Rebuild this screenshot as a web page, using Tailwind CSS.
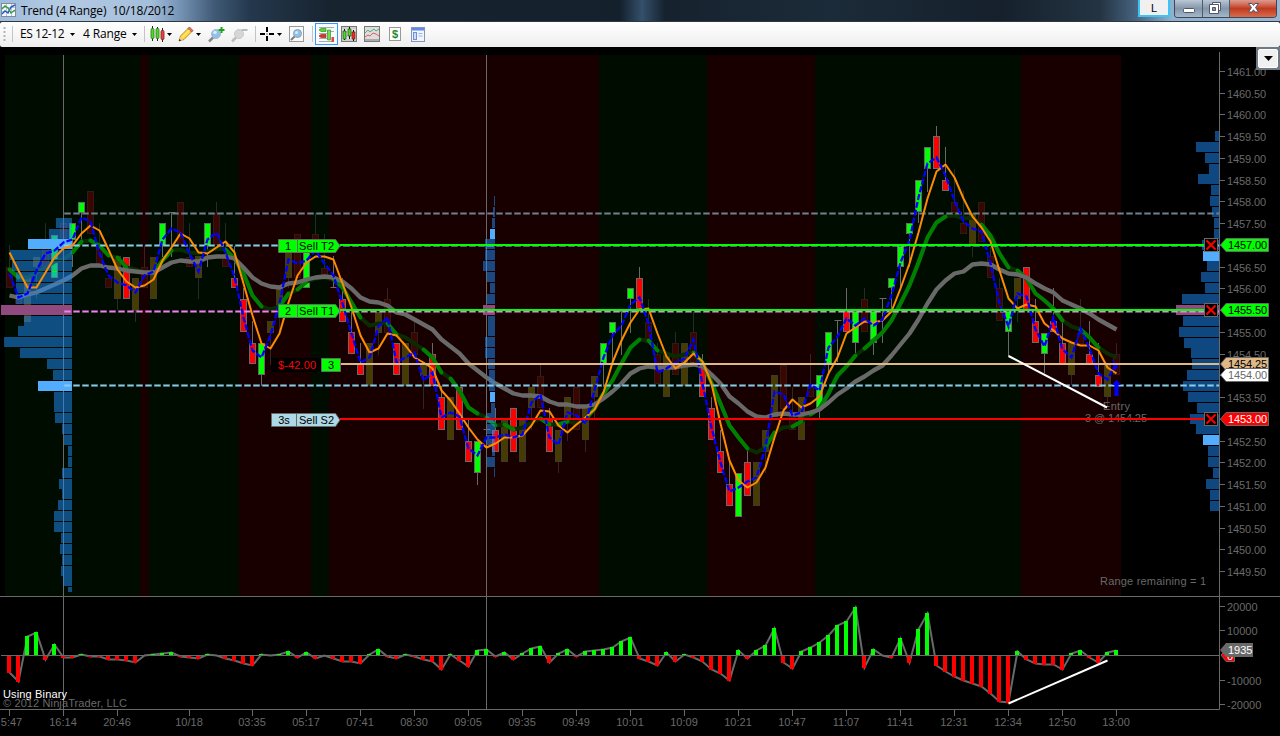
<!DOCTYPE html>
<html lang="en">
<head>
  <meta charset="UTF-8">
  <meta name="viewport" content="width=device-width, initial-scale=1.0">
  <title>Trend (4 Range) 10/18/2012</title>
  <script src="https://cdn.jsdelivr.net/npm/@tailwindcss/browser@4"></script>
</head>
<body class="bg-black w-[1280px] h-[736px] overflow-hidden flex flex-col font-['Open_Sans','Noto_Sans',sans-serif] text-black">

  <!-- title bar -->
  <header class="h-[22px] shrink-0 flex items-start justify-between overflow-hidden border-b border-[#303840] bg-[linear-gradient(90deg,#9dbbdc_0px,#b4cbe3_60px,#a4bedb_150px,#7896b7_178px,#3f5975_215px,#24384d_250px,#17232f_330px,#14202c_620px,#34506c_642px,#16222e_665px,#1c2b39_830px,#15202b_1000px,#243443_1100px,#46637f_1136px,#8fb0cf_1172px,#9ab6d3_1280px)]">
    <div class="flex items-center h-[21px] pl-px">
      <svg class="w-[15px] h-[15px]" viewBox="0 0 15 15">
        <rect x=".5" y=".5" width="14" height="13" fill="#f4f7fb" stroke="#7f8c9b"/>
        <path d="M1 4.500h13M1 8.500h13M5.500 1v12M10.500 1v12" stroke="#b9c6d6"/>
        <path d="M1 11l3-3 3 2 3-6 4-2" fill="none" stroke="#2456c8" stroke-width="1.4"/>
        <path d="M1 6l3-3 3 2 3 5 4-3" fill="none" stroke="#36a03c" stroke-width="1.4"/>
      </svg>
      <span class="ml-[5px] text-[12px] leading-[20px] whitespace-pre tracking-[-0.17px]">Trend (4 Range)  10/18/2012</span>
    </div>
    <div class="flex items-start pr-[3px]">
      <div class="w-[32px] h-[17px] mr-[4px] border-2 border-t-0 border-[#3cc4f4] bg-[#f0f0f0] text-[11px] leading-[16px] text-center font-['Liberation_Sans',sans-serif]">L</div>
      <div class="flex h-[18px] border border-t-0 border-[#3b4858] rounded-b-[4px] overflow-hidden">
        <div class="w-[28px] bg-linear-to-b from-[#b9c7d6] via-[#8496a9] to-[#a3b7cb] border-r border-[#4e5b6b]">
          <svg class="w-[28px] h-[17px]" viewBox="0 0 28 17"><rect x="8.500" y="8.500" width="11" height="4" rx="1" fill="#fff" stroke="#535666"/></svg>
        </div>
        <div class="w-[27px] bg-linear-to-b from-[#b9c7d6] via-[#8496a9] to-[#a3b7cb] border-r border-[#4e5b6b]">
          <svg class="w-[26px] h-[17px]" viewBox="0 0 26 17">
            <path d="M9.500 2.500h8v8h-8z" fill="#fff" stroke="#535666"/>
            <path d="M6.500 4.500h9v9h-9z" fill="#fff" stroke="#535666"/>
            <path d="M9.500 7.500h3v3h-3z" fill="#8496a9" stroke="#535666"/>
          </svg>
        </div>
        <div class="w-[46px] bg-linear-to-b from-[#dd9b8f] via-[#c03a20] to-[#d96a4b]">
          <svg class="w-[46px] h-[17px]" viewBox="0 0 46 17">
            <path d="M18.500 3.500h3.500l1.500 2 1.500-2h3.500l-3 4 3 4.500h-3.500l-1.500-2.200-1.500 2.200h-3.500l3-4.500z" fill="#fff" stroke="#535666"/>
          </svg>
        </div>
      </div>
    </div>
  </header>

  <!-- toolbar -->
  <nav class="h-[25px] shrink-0 flex items-center bg-linear-to-b from-white to-[#eeeeee] text-[12px] leading-[20px] pl-[3px] pb-px rounded-[2px]">
    <svg class="w-[3px] h-[16px]" viewBox="0 0 3 16"><path d="M1.500 1v14" stroke="#b4b4b4" stroke-width="2" stroke-dasharray="2 2"/></svg>
    <i class="w-px h-[16px] bg-[#c4c4c4] ml-[6px]"></i>
    <span class="w-[46px] ml-[7px] whitespace-nowrap tracking-[-0.45px]">ES 12-12</span>
    <svg class="w-[5px] h-[3px] ml-[4px]" viewBox="0 0 5 3"><path d="M0 0h5L2.500 3z"/></svg>
    <span class="w-[45px] ml-[8px] whitespace-nowrap tracking-[-0.15px]">4 Range</span>
    <svg class="w-[5px] h-[3px] ml-[4px]" viewBox="0 0 5 3"><path d="M0 0h5L2.500 3z"/></svg>
    <i class="w-px h-[16px] bg-[#c4c4c4] ml-[7px]"></i>
    <!-- chart style -->
    <svg class="w-[16px] h-[16px] ml-[5px]" viewBox="0 0 16 16">
      <path d="M2.500 0v15M7.500 1v14M12.500 2v14" stroke="#222"/>
      <rect x="1" y="2.500" width="3" height="10" rx="1" fill="#51d62a" stroke="#2b7a1e" stroke-width=".8"/>
      <rect x="6" y="2.500" width="3" height="10" rx="1" fill="#51d62a" stroke="#2b7a1e" stroke-width=".8"/>
      <rect x="11" y="4.500" width="3" height="9" rx="1" fill="#e3453f" stroke="#8a1d18" stroke-width=".8"/>
    </svg>
    <svg class="w-[5px] h-[3px] ml-px" viewBox="0 0 5 3"><path d="M0 0h5L2.500 3z"/></svg>
    <!-- drawing tools -->
    <svg class="w-[16px] h-[16px] ml-[6px]" viewBox="0 0 16 16">
      <path d="M1 15l1.500-5L11 1.500l3.500 3.500L6 13.500z" fill="#ffd83a" stroke="#a87416" stroke-width=".8"/>
      <path d="M10 2.500L11.500 1l3.500 3.500L13.500 6z" fill="#e4726c" stroke="#9c4a3c" stroke-width=".7"/>
      <path d="M1 15l1.300-4.500L5.500 14z" fill="#e9c99a"/><path d="M1 15l.5-2 1.500 1.500z"/><path d="M4.500 11l7-7" stroke="#fff3a5"/>
    </svg>
    <svg class="w-[5px] h-[3px] ml-[2px]" viewBox="0 0 5 3"><path d="M0 0h5L2.500 3z"/></svg>
    <!-- zoom in / out -->
    <svg class="w-[17px] h-[17px] ml-[7px]" viewBox="0 0 17 17">
      <path d="M1 15.500l5-5" stroke="#888" stroke-width="2.500"/>
      <circle cx="8" cy="8" r="4.500" fill="#8fc1ea" stroke="#a9b7c5"/><circle cx="7" cy="6.500" r="1.800" fill="#d8ecfa"/>
      <path d="M13.500 1v6M10.500 4h6" stroke="#18a51c" stroke-width="2"/>
    </svg>
    <svg class="w-[17px] h-[17px] ml-[6px]" viewBox="0 0 17 17">
      <path d="M1 15.500l5-5" stroke="#bdbdbd" stroke-width="2.500"/>
      <circle cx="8" cy="8" r="4.500" fill="#d6d6d6" stroke="#cacaca"/><path d="M10.500 4h6" stroke="#b9b9b9" stroke-width="2"/>
    </svg>
    <i class="w-px h-[16px] bg-[#c4c4c4] ml-[7px]"></i>
    <!-- cross hair -->
    <svg class="w-[14px] h-[14px] ml-[4px]" viewBox="0 0 14 14"><path d="M7 0v5M7 9v5M0 7h5M9 7h5" stroke="#000" stroke-width="2"/><path d="M6.500 6.500h1v1h-1z"/></svg>
    <svg class="w-[5px] h-[3px] ml-[3px]" viewBox="0 0 5 3"><path d="M0 0h5L2.500 3z"/></svg>
    <svg class="w-[16px] h-[16px] ml-[7px]" viewBox="0 0 16 16">
      <rect x=".5" y=".5" width="14" height="15" fill="#fafafa" stroke="#999"/>
      <path d="M2 14l4-4" stroke="#7b7b7b" stroke-width="2"/><circle cx="8.500" cy="7.500" r="4" fill="#8fc1ea" stroke="#8ea1b3"/><circle cx="7.500" cy="6.500" r="1.500" fill="#d8ecfa"/>
    </svg>
    <i class="w-px h-[16px] bg-[#c4c4c4] ml-[7px]"></i>
    <!-- chart trader -->
    <div class="w-[23px] h-[22px] ml-[2px] border border-[#3399ff] bg-[#f8fbfe] flex items-center justify-center">
      <svg class="w-[17px] h-[17px]" viewBox="0 0 17 17">
        <path d="M1 1.500h15M9 5.500h7M1 7.500h9M1 12.500h9M1 15.500h15" stroke="#aaa"/>
        <path d="M1 4l2-1.500h5v3H3z" fill="#51d62a" stroke="#27831b" stroke-width=".6"/>
        <path d="M1 10l2-1.500h5v3H3z" fill="#e3312c" stroke="#8a1d18" stroke-width=".6"/>
        <path d="M9.500 4h3v10h-3z" fill="#6be048" stroke="#27831b" stroke-width=".6"/><path d="M13.500 11h2.500v5h-2.500z" fill="#e3453f"/>
      </svg>
    </div>
    <svg class="w-[16px] h-[16px] ml-[3px]" viewBox="0 0 16 16">
      <rect x=".5" y=".5" width="15" height="15" fill="#ccc" stroke="#777"/><path d="M1 4h14M1 8h14M1 12h14" stroke="#f4f4f4"/>
      <path d="M3.500 3v11M8.500 1v12M12.500 4v11" stroke="#111"/>
      <path d="M2 5h3v8H2z" fill="#51d62a" stroke="#1c5514" stroke-width=".7"/><path d="M7 3h3v7H7z" fill="#51d62a" stroke="#1c5514" stroke-width=".7"/><path d="M11 6h3v7h-3z" fill="#e3312c" stroke="#7d1a15" stroke-width=".7"/>
    </svg>
    <svg class="w-[16px] h-[16px] ml-[7px]" viewBox="0 0 16 16">
      <rect x=".5" y=".5" width="15" height="15" fill="#ddd" stroke="#777"/><path d="M1 13h14v2H1z" fill="#aaa"/>
      <path d="M1 7l3-3 2 2 4-3 2 2 3-2" fill="none" stroke="#4eb07a"/><path d="M1 11l3-2 2 1 3-3 3 1 3 2" fill="none" stroke="#e46060"/>
    </svg>
    <svg class="w-[12px] h-[14px] ml-[9px]" viewBox="0 0 12 14">
      <rect x=".5" y=".5" width="11" height="13" fill="#fff" stroke="#999"/>
      <text x="6" y="11" text-anchor="middle" class="text-[11px] font-bold fill-[#1e8a2a] font-['Liberation_Sans',sans-serif]">$</text>
    </svg>
    <svg class="w-[14px] h-[15px] ml-[10px]" viewBox="0 0 14 15">
      <rect x=".5" y=".5" width="13" height="14" fill="#f2f5fb" stroke="#8796b4"/><path d="M1 1h12v2.500H1z" fill="#5f8be6"/>
      <rect x="2.500" y="5.500" width="3" height="7" fill="#cfdcf8" stroke="#6b8fdc"/><path d="M7.500 6.500h4M7.500 9h4" stroke="#9bb2e6"/>
    </svg>
  </nav>

  <!-- chart -->
  <main class="relative w-[1280px] h-[689px]">
    <svg id="chart" class="block w-[1280px] h-[689px] font-['Liberation_Sans',Arial,sans-serif] text-[11px]" viewBox="0 47 1280 689"></svg>
    <div class="absolute right-0 top-0 w-[24px] h-[23px] bg-[#707a84] p-[2px]">
      <div class="w-full h-full bg-[#f0f0f0] border border-white rounded-[2px] flex items-center justify-center">
        <svg class="w-[9px] h-[5px]" viewBox="0 0 9 5"><path d="M0 0h9L4.500 5z"/></svg>
      </div>
    </div>
  </main>

  <script>
    // g/r = strong up/down, Y/R = faded up/down, T = no body
    // kind, body top, body bottom, wick top, wick bottom
    const bars = `R 267 288 245 288|R 295 304 295 304|Y 278 322 278 322|Y 257 267 257 299|R 245 267 223 267|g 235 278 235 278|R 223 238 223 238|g 223 240 223 267
g 202 213 202 245|R 191 234 191 234|R 245 267 223 267|R 278 288 278 288|Y 256 299 256 310|r 257 299 257 299|Y 278 311 278 322|R 267 288 245 288
Y 257 299 257 299|g 223 246 223 257|T 213 213 213 257|R 202 245 202 245|R 257 267 223 267|Y 256 278 256 299|g 223 246 223 267|R 213 245 202 245
R 257 267 223 267|r 278 288 246 288|r 299 332 288 332|r 343 364 321 364|g 343 375 343 386|Y 321 333 321 365|Y 288 312 288 333|Y 250 278 250 288
R 234 278 234 278|g 246 288 246 288|R 234 246 213 246|R 268 278 234 278|T 288 288 256 288|r 299 322 278 322|r 332 354 310 354|r 364 375 343 375
Y 343 386 343 386|Y 312 333 312 355|R 299 333 288 333|r 343 375 343 375|Y 343 386 343 386|R 332 355 322 355|Y 364 376 364 409|r 354 386 343 386
r 397 430 386 430|Y 397 440 397 440|r 387 430 387 430|r 441 462 420 462|g 441 473 441 485|T 430 430 430 462|r 430 452 408 452|Y 420 462 420 462
r 408 452 408 452|Y 420 462 420 462|Y 387 408 387 430|R 376 408 365 408|r 419 452 408 452|Y 430 462 430 473|Y 397 420 397 441|R 387 430 387 430
Y 408 440 408 452|Y 376 397 376 420|g 343 364 343 387|g 322 333 322 365|T 312 312 312 355|g 288 299 288 333|r 278 309 267 309|R 322 343 299 343
R 354 384 343 384|Y 354 397 354 397|R 343 375 332 375|Y 343 386 343 386|R 332 365 312 365|r 365 397 354 397|r 408 440 397 440|r 451 473 430 473
r 484 506 462 506|g 473 517 473 517|r 462 496 451 496|Y 462 506 462 506|Y 430 452 430 473|Y 375 417 375 417|R 365 409 365 409|R 417 430 387 430
Y 397 440 397 440|R 387 397 354 397|g 375 408 375 418|g 332 364 332 375|T 321 321 321 362|r 311 332 288 332|g 311 343 311 354|R 299 332 288 332
g 311 343 311 355|T 299 299 299 343|g 278 288 278 310|g 246 267 246 288|g 223 234 223 267|g 180 212 180 223|g 147 169 147 192|r 136 169 126 169
r 180 191 147 191|R 202 213 169 213|R 223 234 191 234|Y 213 245 213 257|R 202 242 202 242|R 256 278 247 278|R 288 321 278 321|g 311 332 311 356
Y 278 299 278 322|r 267 310 267 310|r 321 343 299 343|g 333 354 333 373|r 321 332 288 332|r 343 364 321 364|Y 343 375 343 385|R 333 344 299 344
r 354 364 321 364|r 375 387 343 387|Y 365 397 365 407|R 354 375 343 375`.split(/[|\n]/).map(s => s.split(' '));

    const fast = [273,297,293,270,253,250,242,239,217,221,253,275,282,285,292,275,271,239,228,232,253,271,239,232,252,276,317,350,357,335,303,259,263,260,250,263,275,303,333,362,357,326,317,362,357,352,380,372,417,412,416,448,455,437,437,434,437,434,402,394,437,444,412,415,423,390,357,335,325,304,297,323,372,368,362,358,339,383,427,462,491,487,481,477,447,391,394,415,412,384,390,347,336,318,325,318,325,319,295,262,240,197,163,157,175,200,221,228,231,263,303,326,293,296,329,346,317,349,357,328,348,373,379,362];
    const signal = [252,270,287,287,272,257,248,245,233,225,230,249,269,281,287,285,279,260,247,233,238,252,253,247,241,252,283,315,343,348,333,302,275,262,256,256,259,283,307,335,352,348,333,335,345,357,362,368,390,400,413,427,439,447,443,437,437,435,425,410,411,425,432,424,417,409,392,362,340,322,309,308,333,356,368,362,353,361,383,423,460,480,487,482,467,437,410,399,407,403,396,373,357,333,327,321,322,320,311,288,263,232,198,171,164,177,198,216,227,241,270,298,308,304,306,323,330,338,342,345,345,350,367,373];
    const mid = [269,277,277,272,267,261,259,252,241,240,245,255,257,267,269,272,272,260,250,249,252,253,251,248,249,258,273,295,306,309,306,293,289,281,278,277,279,287,302,317,325,323,323,334,337,343,349,357,372,378,390,407,413,417,425,424,429,427,422,418,424,424,421,423,419,408,393,380,363,347,339,340,350,353,356,354,352,362,382,403,425,437,448,452,447,432,427,426,421,414,408,393,375,366,355,348,340,332,320,303,285,262,237,222,216,215,218,217,224,235,253,267,270,278,293,300,308,320,326,329,337,347,353,357];
    const slow = [295,297,294,292,288,284,280,275,268,265,265,267,268,270,271,272,272,267,262,260,261,261,257,256,256,258,267,277,283,286,287,283,282,279,277,276,277,281,288,297,301,302,305,312,314,319,324,329,339,346,353,363,370,377,383,388,393,395,395,396,401,404,404,406,406,404,398,391,383,373,368,366,367,367,367,365,364,366,374,383,396,403,411,416,417,414,413,414,414,412,409,402,394,388,381,376,370,365,355,344,333,319,303,289,280,273,271,264,263,264,269,273,274,277,283,288,292,300,304,308,313,319,324,329];
    // bar ranges where the middle average is trending
    const trending = [[0,1],[7,8],[9,11],[12,13],[16,18],[24,28],[30,31],[32,33],[36,39],[42,43],[46,48],[49,52],[53,54],[55,56],[59,60],[61,62],[64,70],[71,72],[76,82],[84,85],[87,88],[89,94],[95,104],[108,111],[112,117],[119,121]];
    const delta = [-17,-26,19,23,-4,11,-2,-2,1,-1,-1,-4,-4,-5,-7,0,1,2,3,-1,-2,-3,1,0,-3,-5,-8,-10,1,0,1,4,-2,3,-3,0,-3,-6,-6,-8,1,6,-1,-3,1,-1,-4,-6,-14,1,-5,-11,5,6,-1,3,-4,2,7,9,-7,2,6,-1,4,5,6,8,14,18,-3,-6,-10,3,-6,1,-2,-6,-14,-18,-25,5,-3,5,10,27,-7,-13,4,8,13,20,30,34,48,-12,6,0,-2,17,-7,26,42,-10,-16,-21,-25,-28,-31,-38,-46,-47,4,-4,-8,-9,-9,-14,2,5,-2,-7,3,5];

    const X = i => 9.5 + i * 9;
    const pts = (a, from = 0, to = a.length - 1) => a.slice(from, to + 1).map((y, k) => X(from + k) + ',' + (y + .5)).join(' ');
    const out = [];
    const add = s => out.push(s);

    // session bands
    [[5,140,0],[140,149,1],[149,239,0],[239,311,1],[311,329,0],[329,599,1],[599,707,0],[707,815,1],[815,1021,0],[1021,1121,1]]
      .forEach(([a, b, down]) => add(`<rect x="${a}" y="55" width="${b - a}" height="541" class="${down ? 'fill-[#180000]' : 'fill-[#000c00]'}"/>`));

    // price axis
    add('<path d="M1219.5 52V709.500M0 596.500H1280M0 709.500H1219.500M1 655.500H1219" class="stroke-[#696969] fill-none"/>');
    for (let k = 0; k <= 23; k++) {
      const y = Math.round(72 + k * 21.74);
      add(`<path d="M1220 ${y - .5}h5" class="stroke-[#696969]"/>`);
      add(`<text x="1227" y="${y + 4}" textLength="39" class="fill-[#696969]">${(1461 - k * .5).toFixed(2)}</text>`);
    }
    [['20000',607],['10000',631],['-10000',681],['-20000',705]].forEach(([t, y]) =>
      add(`<path d="M1220 ${y - .5}h5" class="stroke-[#696969]"/><text x="1227" y="${y + 4}" class="fill-[#696969]">${t}</text>`));

    // time axis
    const times = ['5:47','16:14','20:46','10/18','03:35','05:17','07:41','08:30','09:05','09:35','09:49','10:01','10:09','10:21','10:47','11:07','11:41','12:31','12:34','12:50','13:00'];
    const slots = [0,6,12,20,27,33,39,45,51,57,63,69,75,81,87,93,99,105,111,117,123];
    times.forEach((t, k) => {
      const x = X(slots[k]);
      add(`<path d="M${x} 710v6" class="stroke-[#696969]"/><text x="${k ? x - .5 : 11.5}" y="726" text-anchor="middle" class="fill-[#696969]">${t}</text>`);
    });

    // candles
    bars.forEach(([k, t, b, wt, wb], i) => {
      const x = X(i), strong = 'grT'.includes(k);
      add(`<path d="M${x} ${wt}V${wb}" class="${strong ? 'stroke-[#696969]' : 'stroke-[#696969]/35'}"/>`);
      if (k === 'T') { add(`<path d="M${x - 3} ${+t - .5}h7" class="stroke-[#696969]"/>`); return; }
      const cls = { g: 'fill-[#00ff00] stroke-[#696969]', r: 'fill-[#ff0000] stroke-[#696969]', Y: 'fill-[#463c00] stroke-[#40382a]', R: 'fill-[#390700] stroke-[#2e1a17]' }[k];
      add(`<rect x="${x - 3}" y="${+t + .5}" width="6" height="${b - t - 1}" class="${cls}"/>`);
    });

    // averages
    add(`<polyline points="${pts(mid)}" class="fill-none stroke-[#0a2a00] stroke-[4px]"/>`);
    trending.forEach(([a, b]) => add(`<polyline points="${pts(mid, a, b)}" stroke-linecap="round" class="fill-none stroke-[#008000] stroke-[4px]"/>`));
    add(`<polyline points="${pts(slow)}" stroke-linejoin="round" class="fill-none stroke-[#696969] stroke-[4.3px]"/>`);

    // session lines
    add('<path d="M63.500 55V709M486.500 55V709" class="stroke-[#696969]"/>');

    // volume profiles: left edges, b = value area, p = point of control
    const profile = (right, y0, rows) => rows.split(' ').forEach((r, k) => {
      const x = parseInt(r), y = Math.round(y0 + k * 10.87);
      const cls = r.endsWith('b') ? 'fill-[#53adff]' : r.endsWith('p') ? 'fill-[#914a80]' : 'fill-[#1e90ff]/50';
      add(`<rect x="${x}" y="${y}" width="${right - x}" height="10" shape-rendering="crispEdges" class="${cls}"/>`);
    });
    profile(72, 217.7, '56 49 28b 10 12 16 16 16 1p 24 18 4 20 47 53 38b 54 54 55 62 64 68 68 62 59 62 58 54 54 61 60 62 61 63');
    add('<rect x="68" y="587" width="4" height="5" class="fill-[#1e90ff]/50"/>');
    profile(495, 196, '494 493 492 490b 485 485 483 487 490 487 483p 488 488 485 485 488 489 489 490b 491 487 487 487 492 487');
    add('<rect x="494" y="468" width="1" height="9" class="fill-[#1e90ff]/50"/>');
    profile(1219, 131, '1215 1196 1205 1209 1198 1211 1210 1212 1214 1214 1202 1203b 1207 1201 1205 1182 1176p 1183 1179 1184 1191 1192 1187 1183 1188 1197 1190 1196 1203b 1208 1208 1213 1206 1210 1210');

    // reference levels
    [[213.5,'stroke-[#708090]','stroke-[#708090]/35'],[245.5,'stroke-[#87ceeb]','stroke-[#87ceeb]/35'],[311.5,'stroke-[#ee82ee]','stroke-[#ee82ee]/35'],[385.5,'stroke-[#87ceeb]','stroke-[#87ceeb]/35']]
      .forEach(([y, dash, base]) => add(`<path d="M64 ${y}H1219" stroke-dasharray="7 2" class="${base} stroke-[3px]"/><path d="M64.500 ${y}H1219" stroke-dasharray="6 3" class="${dash} stroke-[1.6px]"/>`));

    add(`<polyline points="${pts(signal)}" stroke-linejoin="round" class="fill-none stroke-[#ff8c00] stroke-2"/>`);
    add(`<polyline points="${pts(fast)}" stroke-dasharray="6 2" class="fill-none stroke-[#0000ff] stroke-[2.3px]"/>`);
    add('<path d="M1116.500 380l4.500 5h-2.500v11h-4v-11h-2.500zM1112 359l6 7-3 5z" class="fill-[#0000ff]"/>');
    add('<text x="1103" y="410" textLength="27" class="fill-[#696969]">Entry</text><text x="1085" y="422" textLength="62" class="fill-[#696969]">3 @ 1454.25</text>');
    add('<text x="1100" y="585" textLength="106" class="fill-[#696969]">Range remaining = 1</text>');

    // order lines
    add('<path d="M340 245H1204M340 310H1204" class="stroke-[#00ff00] stroke-2"/>');
    add('<path d="M340 364H1219" class="stroke-[#deb887] stroke-2"/><path d="M340 419H1204" class="stroke-[#ff0000] stroke-2"/>');
    add('<path d="M1008.500 356L1107 407.500" class="stroke-white stroke-2"/>');

    const tag = (x, y, div, q, name, cls) => add(`<path d="M${x + .5} ${y - 6.500}H335.500L340 ${y}L335.500 ${y + 6.500}H${x + .5}z" class="${cls} stroke-[#696969]"/>
      <path d="M${div + .5} ${y - 6}v12" class="stroke-[#696969]"/><text x="${(x + div) / 2 + .5}" y="${y + 4}" text-anchor="middle">${q}</text><text x="299" y="${y + 4}" textLength="35">${name}</text>`);
    tag(278, 246, 297, '1', 'Sell T2', 'fill-[#00ff00]');
    tag(278, 311, 297, '2', 'Sell T1', 'fill-[#00ff00]');
    tag(271, 420, 296, '3s', 'Sell S2', 'fill-[#add8e6]');
    add('<path d="M271 358h50v14h-50z"/><text x="278" y="369" textLength="38" class="fill-[#ff0000]">$-42.00</text>');
    add('<path d="M321.500 358.500h19v13h-19z" class="fill-[#00ff00] stroke-[#696969]"/><text x="331" y="369" text-anchor="middle">3</text>');

    // price tags and cancel boxes
    const price = (y, t, cls, ink) => add(`<path d="M1220.500 ${y}L1226 ${y - 6.500}H1268.500V${y + 6.500}H1226z" class="${cls} stroke-[#696969]"/><text x="1228" y="${y + 4}" textLength="39" class="${ink}">${t}</text>`);
    price(364, '1454.25', 'fill-[#deb887]', 'fill-black');
    price(375, '1454.00', 'fill-white', 'fill-[#696969]');
    price(245, '1457.00', 'fill-[#00ff00]', 'fill-black');
    price(310, '1455.50', 'fill-[#00ff00]', 'fill-black');
    price(419, '1453.00', 'fill-[#ff0000]', 'fill-white');
    [245, 310, 419].forEach(y => add(`<rect x="1204.500" y="${y - 6.500}" width="13" height="13" class="fill-black stroke-[#696969]"/><path d="M1206.500 ${y - 4.500}l9 9m0-9l-9 9" class="stroke-[#ff0000] stroke-2"/>`));

    // delta panel
    add(`<polyline points="${delta.map((v, i) => X(i) + ',' + (655.5 - v)).join(' ')}" class="fill-none stroke-[#696969] stroke-2"/>`);
    delta.forEach((v, i) => v && add(`<rect x="${X(i) - 2.5}" y="${v > 0 ? 655 - v : 656}" width="4" height="${Math.abs(v)}" class="${v > 0 ? 'fill-[#00ff00]' : 'fill-[#ff0000]'}"/>`));
    add('<path d="M1008.500 703.500L1107.500 660.500" class="stroke-white stroke-2"/>');
    add('<path d="M1221 655l5-5h8.500v11.500h-8.500z" class="fill-[#ff0000] stroke-[#696969]"/><text x="1227" y="660" class="fill-white">0</text>');
    add('<path d="M1220 650l6-7h27v14h-27z" class="fill-[#696969]"/><text x="1228" y="654" class="fill-white">1935</text>');
    add('<text x="3" y="698" textLength="64" class="fill-white">Using Binary</text><text x="3" y="707" textLength="124" class="fill-[#696969]">© 2012 NinjaTrader, LLC</text>');

    document.getElementById('chart').innerHTML = out.join('');
  </script>
</body>
</html>
